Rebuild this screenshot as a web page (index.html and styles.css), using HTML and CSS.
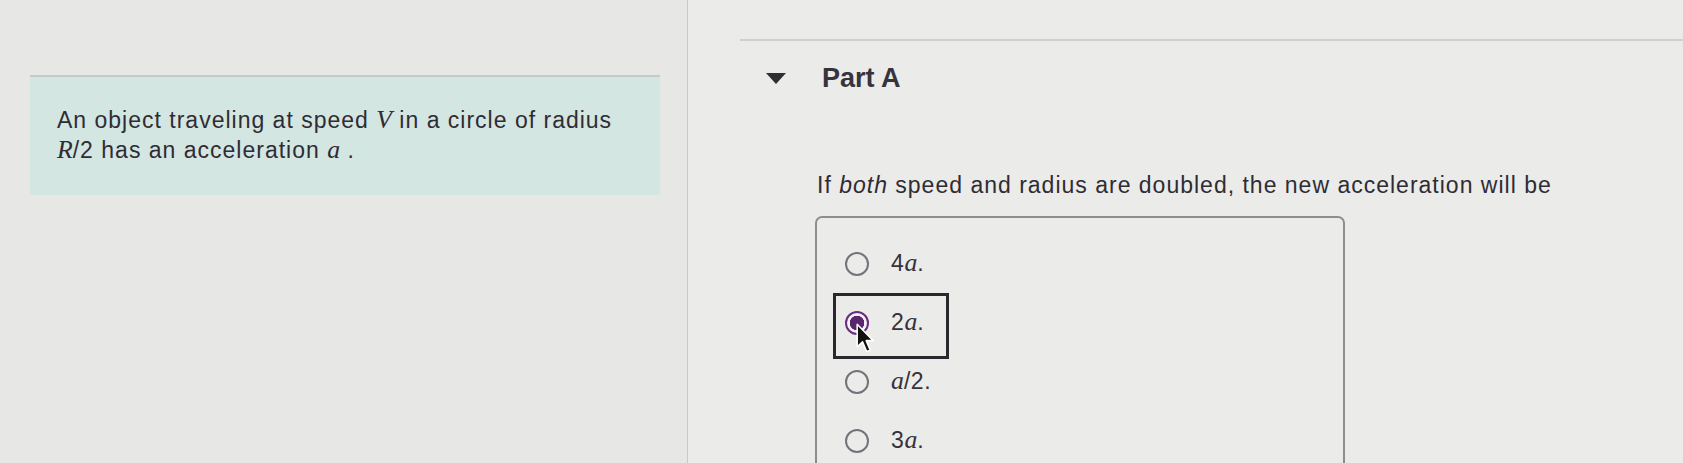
FILE: index.html
```html
<!DOCTYPE html>
<html>
<head>
<meta charset="utf-8">
<link rel="stylesheet" href="styles.css">
</head>
<body>
<div class="page">
  <div class="left">
    <div class="problem">
      <p class="ptext">An object traveling at speed <span class="m">V</span> in a circle of radius <span class="m">R</span>/2 has an acceleration <span class="m">a</span> .</p>
    </div>
  </div>
  <div class="divider"></div>
  <div class="right">
    <div class="rule"></div>
    <div class="part-head">
      <span class="tri"></span>
      <span class="part-title">Part A</span>
    </div>
    <p class="question">If <em>both</em> speed and radius are doubled, the new acceleration will be</p>
    <div class="options">
      <div class="opt"><span class="radio"></span><span class="otext">4<span class="m">a</span>.</span></div>
      <div class="opt selected"><span class="radio on"></span><span class="otext">2<span class="m">a</span>.</span>
        <svg class="cursor" width="19" height="31" viewBox="0 0 16 26"><path d="M1 1 L1 20 L5.5 15.8 L9 24 L12 22.8 L8.6 14.8 L14.5 14.8 Z" fill="#111" stroke="#fff" stroke-width="1.3" stroke-linejoin="round"/></svg>
      </div>
      <div class="opt"><span class="radio"></span><span class="otext"><span class="m">a</span>/2.</span></div>
      <div class="opt"><span class="radio"></span><span class="otext">3<span class="m">a</span>.</span></div>
    </div>
  </div>
</div>
</body>
</html>
```

FILE: styles.css
```css
html, body {
  margin: 0;
  padding: 0;
}
body {
  width: 1683px;
  height: 463px;
  overflow: hidden;
  background: #e7e7e5;
  font-family: "Liberation Sans", Arial, sans-serif;
  color: #2f2c34;
}
.page {
  display: flex;
  height: 463px;
}
.left {
  width: 687px;
  flex: none;
  box-sizing: border-box;
  padding-top: 75px;
  padding-left: 30px;
}
.problem {
  width: 630px;
  box-sizing: border-box;
  background: #d4e6e2;
  border-top: 2px solid #c4cac8;
  padding: 28px 36px 30px 27px;
}
.ptext {
  margin: 0;
  font-size: 23px;
  line-height: 30px;
  letter-spacing: 1px;
}
.m {
  font-family: "Liberation Serif", "Times New Roman", serif;
  font-style: italic;
  font-size: 1.12em;
  letter-spacing: 0;
  line-height: 1;
}
.divider {
  width: 1px;
  flex: none;
  background: #c8c8d1;
}
.right {
  flex: 1;
  background: #ebebe9;
}
.rule {
  margin-left: 52px;
  margin-top: 39px;
  height: 2px;
  background: #d0d0cf;
}
.part-head {
  display: flex;
  align-items: center;
  margin-left: 78px;
  margin-top: 22px;
  height: 30px;
}
.tri {
  width: 0;
  height: 0;
  border-left: 10px solid transparent;
  border-right: 10px solid transparent;
  border-top: 11px solid #2f2c34;
  margin-right: 36px;
}
.part-title {
  font-size: 27px;
  font-weight: bold;
  line-height: 30px;
  color: #36333c;
}
.question {
  margin: 77px 0 0 129px;
  font-size: 23px;
  line-height: 30px;
  letter-spacing: 1px;
}
.question em {
  font-style: italic;
}
.options {
  margin: 16px 0 0 127px;
  width: 530px;
  height: 300px;
  box-sizing: border-box;
  border: 2px solid #8e8e8e;
  border-radius: 7px;
  padding: 16px 0 0 19px;
}
.opt {
  display: flex;
  align-items: center;
  gap: 22px;
  height: 59px;
  width: fit-content;
  padding: 0 23px 0 9px;
  position: relative;
}
.opt.selected::before {
  content: "";
  position: absolute;
  left: -3px;
  right: -2px;
  top: 0;
  bottom: -7px;
  border: 3px solid #2a282c;
  pointer-events: none;
}
.radio {
  width: 24px;
  height: 24px;
  box-sizing: border-box;
  border: 2px solid #76727a;
  border-radius: 50%;
  flex: none;
}
.radio.on {
  border: 2.5px solid #6b2d7d;
  background: radial-gradient(circle, #5a276d 0 7px, #f4f2f5 7.5px);
}
.otext {
  font-size: 23px;
  letter-spacing: 0.6px;
  color: #35323a;
}
.cursor {
  position: absolute;
  left: 20px;
  top: 30px;
}
```
